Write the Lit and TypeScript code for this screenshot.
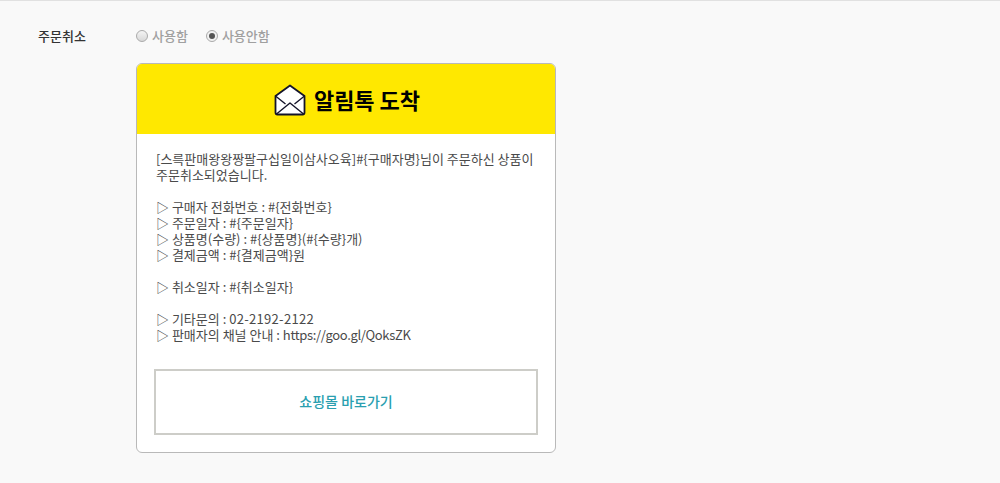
import { LitElement, html, css } from "lit";
import { customElement } from "lit/decorators.js";

@customElement("app-root")
export class AppRoot extends LitElement {
  static styles = css`
    :host {
      display: block;
      width: 1000px;
      height: 483px;
      box-sizing: border-box;
      overflow: hidden;
      background: #f9f9f9;
      border-top: 1px solid #e1e1e1;
      font-family: "Noto Sans CJK KR", "Liberation Sans", sans-serif;
    }
    .row {
      display: flex;
      padding: 25px 0 0 38px;
    }
    .label {
      width: 98px;
      font-size: 13px;
      line-height: 19px;
      font-weight: 500;
      color: #333;
    }
    .field {
      display: flex;
      flex-direction: column;
      width: 420px;
    }
    .radios {
      display: flex;
      gap: 18px;
      height: 19px;
      font-size: 13px;
      line-height: 19px;
      color: #a0a0a0;
      font-weight: 500;
    }
    .radio {
      display: flex;
      align-items: center;
      gap: 4px;
    }
    .dot {
      width: 10px;
      height: 10px;
      border: 1px solid #aaa;
      border-radius: 50%;
      background: linear-gradient(#f4f4f4, #d8d8d8);
      display: flex;
      align-items: center;
      justify-content: center;
    }
    .dot.on {
      background: #f2f2f2;
    }
    .dot.on::after {
      content: "";
      width: 6px;
      height: 6px;
      border-radius: 50%;
      background: #555;
    }
    .card {
      margin-top: 18px;
      box-sizing: border-box;
      width: 420px;
      height: 390px;
      background: #fff;
      border: 1px solid #b9b9b9;
      border-radius: 6px;
      overflow: hidden;
      display: flex;
      flex-direction: column;
    }
    .head {
      height: 70px;
      flex: none;
      background: #ffe800;
      display: flex;
      align-items: center;
      justify-content: center;
      gap: 8px;
      font-size: 22px;
      font-weight: 700;
      color: #000;
    }
    .head svg {
      display: block;
      margin: 2px 0 0 2px;
    }
    .body {
      padding: 17px 19px 0;
      font-size: 13px;
      line-height: 16px;
      color: #4a4a4a;
      height: 220px;
      flex: none;
      box-sizing: border-box;
    }
    .line {
      min-height: 16px;
    }
    .num {
      letter-spacing: 0.3px;
    }
    .url {
      letter-spacing: -0.33px;
    }
    .btn {
      margin: 15px 17px 0;
      height: 66px;
      box-sizing: border-box;
      border: 2px solid #cdcdc8;
      padding-bottom: 3px;
      display: flex;
      align-items: center;
      justify-content: center;
      font-size: 14px;
      font-weight: 500;
      color: #2a9fb0;
    }
  `;

  render() {
    return html`
      <div class="row">
        <div class="label">주문취소</div>
        <div class="field">
          <div class="radios">
            <span class="radio"><span class="dot"></span>사용함</span>
            <span class="radio"><span class="dot on"></span>사용안함</span>
          </div>
          <div class="card">
            <div class="head">
              <svg width="32" height="32" viewBox="0 0 32 32" fill="#fff" stroke="#14142a" stroke-width="1.8" stroke-linejoin="round">
                <path d="M1.5 12 L16 1.5 L30.5 12 V28.5 Q30.5 30.5 28.5 30.5 H3.5 Q1.5 30.5 1.5 28.5 Z" />
                <path d="M1.5 12 L11.5 20 M30.5 12 L20.5 20" fill="none" stroke-width="1.4" />
                <path d="M2.5 30 L16 19 L29.5 30" fill="none" stroke-width="1.4" />
              </svg>
              <span>알림톡 도착</span>
            </div>
            <div class="body">
              <div class="line">[스륵판매왕왕짱팔구십일이삼사오육]#{구매자명}님이 주문하신 상품이 주문취소되었습니다.</div>
              <div class="line"></div>
              <div class="line">▷ 구매자 전화번호 : #{전화번호}</div>
              <div class="line">▷ 주문일자 : #{주문일자}</div>
              <div class="line">▷ 상품명(수량) : #{상품명}(#{수량}개)</div>
              <div class="line">▷ 결제금액 : #{결제금액}원</div>
              <div class="line"></div>
              <div class="line">▷ 취소일자 : #{취소일자}</div>
              <div class="line"></div>
              <div class="line">▷ 기타문의 : <span class="num">02-2192-2122</span></div>
              <div class="line">▷ 판매자의 채널 안내 : <span class="url">https://goo.gl/QoksZK</span></div>
            </div>
            <div class="btn">쇼핑몰 바로가기</div>
          </div>
        </div>
      </div>
    `;
  }
}
